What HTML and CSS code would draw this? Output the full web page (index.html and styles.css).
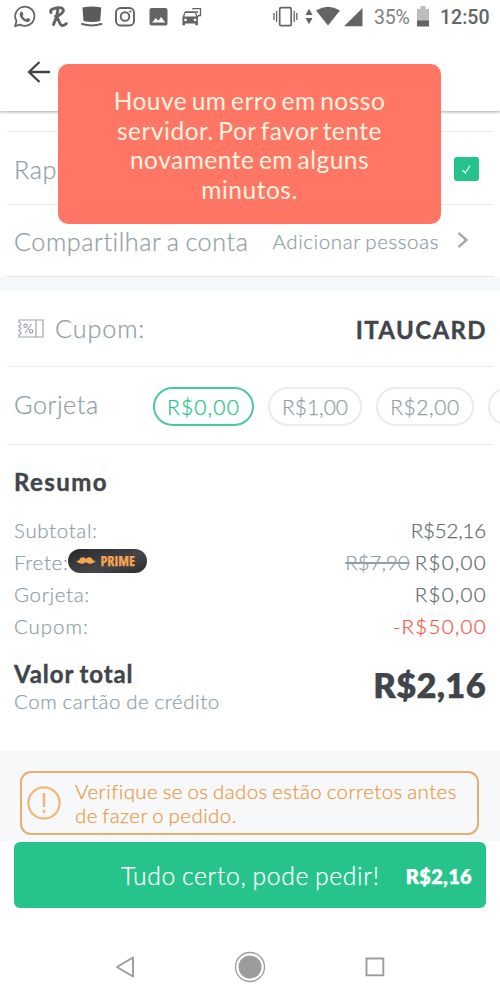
FILE: index.html
```html
<!DOCTYPE html>
<html lang="pt-BR">
<head>
<meta charset="utf-8">
<title>Resumo do pedido</title>
<link rel="stylesheet" href="styles.css">
</head>
<body>
<div class="screen">
  <header class="header">
    <div class="status">
      <svg class="status-left" width="210" height="34" viewBox="0 0 210 34" fill="none" stroke="#646464">
        <path d="M15 26.2l1.500-5.200a9.600 9.600 0 1 1 3.600 3.600z" stroke-width="1.800" stroke-linejoin="round"/>
        <path d="M20.500 12.200c.5-.9 1.600-.9 2 0l.9 2.100c.1.500-.8 1.300-.8 1.600.8 1.600 2 2.700 3.600 3.400.5.100 1.100-1.300 1.600-1.200l2.100 1c.6.400.1 2-.7 2.500-1.600.9-3.500.300-5.200-.8-1.700-1.100-3.200-2.800-4-4.600-.6-1.500-.3-3.100.5-4z" fill="#646464" stroke="none"/>
        <path d="M51 12.500c-1.500-2.500 2.500-4.300 7-4.800 6-.6 6.500 3.200 3.500 5.800-1.500 1.600-4 2.600-6 2.700 3-.2 3.200 8.800 6.500 9.300 2 .3 3.300-.7 4.300-1.900M58 9.500c-.8 5.500-2.200 10.500-4.500 15" stroke-width="2.900" stroke-linecap="round" stroke-linejoin="round"/>
        <path d="M82.500 7.500q9.300-2 18.700 0l-1 13.500q-8.500 2-16.700 0z" fill="#5b5b5b" stroke="none"/>
        <path d="M82 24q9.500 2.800 19.500 0" stroke-width="2" stroke-linecap="round"/>
        <rect x="116" y="8" width="18" height="17.500" rx="4.500" stroke-width="1.900"/>
        <circle cx="125" cy="16.500" r="4.300" stroke-width="1.900"/>
        <circle cx="130.300" cy="11.500" r="1.100" fill="#646464" stroke="none"/>
        <path d="M151.500 8h14q2 0 2 2v13.500q0 2-2 2h-14q-2 0-2-2V10q0-2 2-2zM152 22.500h13.200l-4-5.500-3 3.700-2.400-2.800z" fill="#646464" fill-rule="evenodd" stroke="none"/>
        <path d="M193 9.500V8.700h7.500v6.800h-1.800l-2.200 2.500M195.500 12h2.500" stroke-width="1.300"/>
        <path d="M184.300 12.500q.4-1.200 1.500-1.200h8.700q1.100 0 1.500 1.200l1.900 5v7.800h-2.600v-1.800h-10.300v1.800h-2.600v-7.800zM185.300 13l-1.100 3.500h11.900L195 13zM185.500 18.500a1.400 1.400 0 1 0 .01 0zM195 18.500a1.400 1.400 0 1 0 .01 0z" fill="#646464" fill-rule="evenodd" stroke="none"/>
      </svg>
      <svg class="status-right" width="104" height="34" viewBox="270 0 104 34" fill="#646464">
        <rect x="279.700" y="7.700" width="11.500" height="18" rx="1.500" fill="none" stroke="#646464" stroke-width="1.700"/>
        <path d="M274 13v7M276.600 11v11M294.200 11v11M296.800 13v7" stroke="#646464" stroke-width="1.300"/>
        <path d="M305.500 15l3.500-6.200 3.500 6.200zM305.500 18l3.500 6.200 3.500-6.200z"/>
        <path d="M316 10.500q12-7.300 24 0L328 25.500z"/>
        <path d="M362.500 8v18.200H344z"/>
      </svg>
      <span class="battery-text">35%</span>
      <svg class="battery" width="12" height="21" viewBox="0 0 12 21">
        <path d="M0 3h3.500V0h5v3H12v12H0z" fill="#bdbdbd"/><path d="M0 14.500h12v6H0z" fill="#646464"/>
      </svg>
      <span class="clock">12:50</span>
    </div>
    <svg class="back" width="24" height="24" viewBox="0 0 24 24" fill="none" stroke="#3f454a" stroke-width="2.300"><path d="M23 12H2.500M12.500 2L2 12l10.500 10"/></svg>
  </header>

  <main>
    <section class="group">
      <div class="row row-fast">
        <span class="label">Rap</span>
        <span class="check"><svg width="25" height="24" viewBox="0 0 25 24" fill="none" stroke="#fff" stroke-width="1.200"><path d="M8.500 13l2.800 3L16 8.500"/></svg></span>
      </div>
      <div class="row row-share">
        <span class="label share-label">Compartilhar a conta</span>
        <span class="add">Adicionar pessoas</span>
        <svg class="chevron" width="12" height="18" viewBox="0 0 12 18" fill="none" stroke="#a6aaad" stroke-width="2.500"><path d="M1.500 2l8 7-8 7"/></svg>
      </div>
    </section>

    <section class="group group-coupon">
      <div class="row row-coupon">
        <svg class="ticket" width="26" height="19" viewBox="0 0 26 19" fill="none" stroke="#9aa5ab" stroke-width="1.200">
          <path d="M1 1h24v17H1v-2.500q2-.5 2-1.700T1 12V11q2-.5 2-1.600T1 8V6.500q2-.3 2-1.500T1 3.500zM18 1v17"/>
          <path d="M7 14l6.500-9"/><circle cx="7.500" cy="6.800" r="1.700"/><circle cx="13" cy="12.200" r="1.700"/>
        </svg>
        <span class="label coupon-label">Cupom:</span>
        <strong class="code">ITAUCARD</strong>
      </div>
      <div class="row row-tip">
        <span class="label tip-label">Gorjeta</span>
        <div class="chips">
          <span class="chip chip-on">R$0,00</span>
          <span class="chip chip-one">R$1,00</span>
          <span class="chip chip-two">R$2,00</span>
          <span class="chip chip-more"></span>
        </div>
      </div>
    </section>

    <section class="summary">
      <h2 class="title">Resumo</h2>
      <div class="line"><span>Subtotal:</span><span class="value value-tight">R$52,16</span></div>
      <div class="line"><span>Frete:</span>
        <span class="prime">
          <svg width="20" height="8" viewBox="0 0 20 8" fill="#f7a550"><path d="M10 2C8-.5 5-.3 3.700 2.200 2.800 4 1.500 4.200 0 3.600 1.500 7 7.500 8 10 5c2.500 3 8.500 2 10-1.400-1.500.6-2.800.4-3.700-1.400C15-.3 12-.5 10 2z"/></svg>
          <b>PRIME</b>
        </span>
        <s class="old">R$7,90</s><span class="value value-new">R$0,00</span></div>
      <div class="line"><span>Gorjeta:</span><span class="value">R$0,00</span></div>
      <div class="line"><span class="wide">Cupom:</span><span class="value discount">-R$50,00</span></div>
      <div class="total">
        <div class="total-text"><strong>Valor total</strong><span>Com cartão de crédito</span></div>
        <strong class="total-value">R$2,16</strong>
      </div>
    </section>

    <section class="notice-wrap">
      <div class="notice">
        <svg width="34" height="34" viewBox="0 0 34 34" fill="none" stroke="#f3b678" stroke-width="2.200"><circle cx="17" cy="17" r="15.600"/><path d="M17 7v14M17 24v3" stroke-width="2.500"/></svg>
        <p>Verifique se os dados estão corretos antes<br>de fazer o pedido.</p>
      </div>
    </section>
  </main>

  <button class="order"><span>Tudo certo, pode pedir!</span><strong>R$2,16</strong></button>

  <nav class="nav">
    <svg width="20" height="22" viewBox="0 0 20 22"><path d="M18 1.500v19L2 11z" fill="none" stroke="#9c9c9c" stroke-width="1.900" stroke-linejoin="round"/></svg>
    <svg width="32" height="32" viewBox="0 0 32 32"><circle cx="16" cy="16" r="14.500" fill="none" stroke="#9c9c9c" stroke-width="1.300"/><circle cx="16" cy="16" r="11.500" fill="#9c9c9c"/></svg>
    <svg width="20" height="20" viewBox="0 0 20 20"><rect x="1.500" y="1.500" width="16.800" height="16.800" fill="none" stroke="#9c9c9c" stroke-width="1.900"/></svg>
  </nav>

  <div class="toast" role="alert">Houve um erro em nosso<br>servidor. Por favor tente<br>novamente em alguns<br>minutos.</div>
</div>
</body>
</html>
```

FILE: styles.css
```css
* { box-sizing: border-box; }
body { margin: 0; background: #fff; font-family: Lato, "Liberation Sans", sans-serif; font-variant-ligatures: none; }
.screen { position: relative; width: 500px; height: 1000px; overflow: hidden; display: flex; flex-direction: column; font-weight: 300; color: #929fa7; -webkit-text-stroke: 0.250px currentColor; }
.header { height: 111px; flex: none; background: #fff; box-shadow: 0 1px 3px rgba(0, 0, 0, 0.35); }
.status { display: flex; align-items: center; height: 34px; font-family: Roboto, sans-serif; font-size: 19.500px; font-weight: 400; color: #808080; -webkit-text-stroke: 0; }
.status-left { margin-right: 60px; }
.battery-text { width: 43px; letter-spacing: -0.200px; }
.battery { margin-top: -1px; }
.clock { margin-left: 11px; font-weight: 500; color: #646464; letter-spacing: 0; }
.back { display: block; margin: 26px 0 0 27px; }

main { flex: none; }
.group { margin: 20px 6px 0 7px; }
.row { display: flex; align-items: center; }
.row-fast { height: 74px; padding: 1px 15px 0 7px; border-top: 1px solid #e9ebec; border-bottom: 1px solid #e9ebec; justify-content: space-between; }
.row-share { height: 72px; padding: 1px 25px 0 7px; border-bottom: 1px solid #e2e5e7; }
.label { font-size: 25.200px; letter-spacing: 0.600px; white-space: nowrap; }
.share-label { word-spacing: -1.500px; letter-spacing: 0.550px; }
.check { width: 25px; height: 24px; border-radius: 3px; background: #25c38a; }
.add { margin-left: auto; font-size: 20.500px; letter-spacing: 0.600px; word-spacing: -1.500px; white-space: nowrap; }
.chevron { margin-left: 18px; margin-top: -2px; }

.group-coupon { margin: 0; padding: 0 6px 0 7px; border-top: 14px solid #f5f8fa; }
.row-coupon { height: 76px; padding: 0 7px 2px 11px; border-bottom: 1px solid #e9ebec; }
.ticket { margin-top: 2px; }
.coupon-label { margin-left: 11px; letter-spacing: 0.900px; }
.code { margin-left: auto; padding-top: 3px; font-size: 24px; font-weight: 700; letter-spacing: 1.400px; color: #3f454a; -webkit-text-stroke: 0.400px #3f454a; }
.row-tip { height: 78px; padding-left: 7px; border-bottom: 1px solid #e9ebec; }
.tip-label { width: 139px; margin-top: -3px; letter-spacing: 0.550px; }
.chips { display: flex; gap: 14px; margin-top: 1px; width: 347px; margin-right: -6px; overflow: hidden; }
.chip { flex: none; display: flex; align-items: center; justify-content: center; width: 98px; height: 39px; border: 2px solid #e9ebec; border-radius: 20px; font-size: 21px; letter-spacing: 0.600px; }
.chip-on { width: 101px; border-color: #4cc89f; color: #25c38a; letter-spacing: 1.150px; }
.chip-one { width: 94px; letter-spacing: 0; }

.summary { height: 306px; padding: 22px 14px 0; }
.title { margin: 0 0 17px; font-size: 24px; line-height: 30px; font-weight: 700; letter-spacing: 1.400px; color: #3f454a; -webkit-text-stroke: 0.400px #3f454a; }
.line { display: flex; align-items: center; height: 32px; font-size: 20.500px; letter-spacing: 0.650px; }
.wide { letter-spacing: 0.950px; }
.value { margin-left: auto; letter-spacing: 1.300px; margin-right: -1px; color: #626a70; }
.value-tight { letter-spacing: -0.150px; margin-right: 0; }
.value-new { margin-left: 5px; }
.old { margin-left: auto; letter-spacing: 0; }
.discount { color: #f4564c; }
.prime { display: flex; align-items: center; gap: 4px; width: 79px; height: 24px; margin-top: -3px; padding-left: 8px; border-radius: 12px; background: linear-gradient(160deg, #26282c, #45464a 60%, #292a2e); color: #f7a550; }
.prime b { font: 700 14px/24px "Open Sans", sans-serif; letter-spacing: 0; font-stretch: 85%; }
.total { display: flex; align-items: center; justify-content: space-between; margin-top: 17px; }
.total-text { display: flex; flex-direction: column; font-size: 20.500px; letter-spacing: 0.570px; word-spacing: -1px; }
.total-text strong { font-size: 24px; line-height: 29px; font-weight: 700; letter-spacing: 0.900px; color: #3f454a; -webkit-text-stroke: 0.400px #3f454a; }
.total-text span { line-height: 27px; }
.total-value { margin-top: -5px; font-size: 34.500px; font-weight: 800; letter-spacing: 0.300px; color: #3f454a; }

.notice-wrap { height: 90px; padding: 20px 21px 0 20px; background: #f6f8fa; }
.notice { display: flex; align-items: center; height: 64px; border: 2px solid #e8ad70; border-radius: 11px; padding-left: 5px; color: #eb9c47; }
.notice p { margin: 0 0 0 14px; font-size: 20.500px; line-height: 24.500px; letter-spacing: 0.430px; word-spacing: -1.500px; white-space: nowrap; }

.order { display: flex; align-items: center; flex: none; width: 472px; height: 66px; margin: 1px 14px 0; padding: 1px 14px 0 107px; border: 0; border-radius: 6px; background: #26c48b; color: #fff; font-family: inherit; font-variant-ligatures: none; font-size: 24.700px; font-weight: 300; letter-spacing: 0.680px; word-spacing: -1.500px; justify-content: space-between; }
.order strong { font-size: 20px; font-weight: 800; letter-spacing: 0.300px; }
.nav { display: flex; justify-content: space-between; align-items: center; width: 270px; margin: 43px auto 0; }

.toast { position: absolute; left: 58px; top: 64px; width: 383px; height: 160px; padding-top: 22px; border-radius: 10px; background: #ff7764; color: #fff3e2; font-size: 24.500px; font-weight: 400; -webkit-text-stroke: 0; line-height: 29.700px; letter-spacing: 0.500px; word-spacing: -2.300px; text-align: center; }
```
